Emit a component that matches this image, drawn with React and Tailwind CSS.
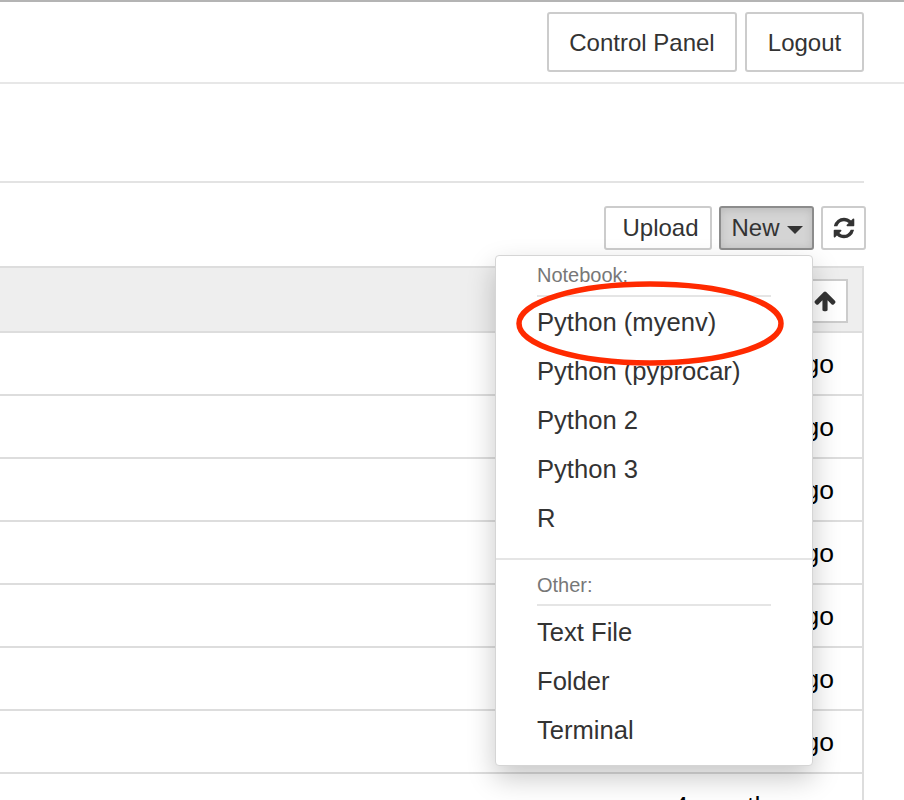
const font = { fontFamily: '"Liberation Sans", Arial, sans-serif' };

const kernels = ["Python (myenv)", "Python (pyprocar)", "Python 2", "Python 3", "R"];
const others = ["Text File", "Folder", "Terminal"];
const rows = [0, 1, 2, 3, 4, 5, 6];

const MenuItem = ({ label }) => (
  <div className="flex h-[49px] items-center pl-[41px] text-[25.6px] text-[#333]">{label}</div>
);

const RefreshIcon = () => (
  <svg width="24" height="24" viewBox="0 0 1792 1792" fill="currentColor">
    <path d="M1639 1056q0 5-1 7-64 268-268 434.5t-478 166.5q-146 0-282.5-55t-243.5-157l-129 129q-19 19-45 19t-45-19-19-45v-448q0-26 19-45t45-19h448q26 0 45 19t19 45-19 45l-137 137q71 66 161 102t187 36q134 0 250-65t186-179q11-17 53-117 8-23 30-23h192q13 0 22.5 9.5t9.5 22.5zm25-800v448q0 26-19 45t-45 19h-448q-26 0-45-19t-19-45 19-45l138-138q-148-137-349-137-134 0-250 65t-186 179q-11 17-53 117-8 23-30 23h-199q-13 0-22.5-9.5t-9.5-22.5v-7q65-268 270-434.5t480-166.5q146 0 284 55.5t245 156.5l130-129q19-19 45-19t45 19 19 45z" />
  </svg>
);

const ArrowUpIcon = () => (
  <svg width="24" height="24" viewBox="0 0 1792 1792" fill="currentColor">
    <path d="M1675 971q0 51-37 90l-75 75q-38 38-91 38-54 0-90-38l-294-293v704q0 52-37.5 84.5t-90.5 32.5h-128q-53 0-90.5-32.5t-37.5-84.5v-704l-294 293q-36 38-90 38t-90-38l-75-75q-38-38-38-90 0-53 38-91l651-651q35-37 90-37 54 0 91 37l651 651q37 39 37 91z" />
  </svg>
);

const App = () => {
  return (
    <div
      style={font}
      className="relative h-[800px] w-[904px] overflow-hidden border-t-2 border-[#b4b4b4] bg-white text-black"
    >
      {/* Top header */}
      <div className="flex h-[82px] justify-end gap-[8px] border-b-2 border-[#e7e7e7] pr-[40px] pt-[10px]">
        <button className="h-[60px] w-[190px] rounded-[3px] border-2 border-[#ccc] pt-[2px] text-[24px] text-[#333]">
          Control Panel
        </button>
        <button className="h-[60px] w-[119px] rounded-[3px] border-2 border-[#ccc] pt-[2px] text-[24px] text-[#333]">
          Logout
        </button>
      </div>

      <div className="h-[97px]" />

      <div className="w-[864px] border-b-2 border-[#e3e3e3]" />

      {/* Toolbar */}
      <div className="flex justify-end gap-[7px] pr-[38px] pt-[23px]">
        <button className="h-[44px] w-[108px] rounded-[3px] border-2 border-[#ccc] pl-[5px] text-[24px] text-[#333]">
          Upload
        </button>
        <button className="flex h-[44px] w-[95px] items-center justify-center gap-[7px] rounded-[3px] border-2 border-[#8c8c8c] bg-[#d4d4d4] pl-[1px] text-[24px] text-[#333] shadow-[inset_0_2px_8px_rgba(0,0,0,0.125)]">
          New
          <span className="mt-[3px] h-0 w-0 border-x-[8px] border-t-[8px] border-x-transparent border-t-[#333]" />
        </button>
        <button className="flex h-[44px] w-[45px] items-center justify-center rounded-[3px] border-2 border-[#ccc] text-[#333]">
          <RefreshIcon />
        </button>
      </div>

      {/* File list */}
      <div className="mt-[16px] w-[864px] border-r-2 border-t-2 border-[#ddd]">
        <div className="flex h-[65px] items-start justify-end border-b-2 border-[#ddd] bg-[#eee] pr-[14px] pt-[11px]">
          <button className="flex h-[44px] w-[60px] items-center justify-center border-2 border-[#ccc] bg-white pl-[14px] text-[#333]">
            <ArrowUpIcon />
          </button>
        </div>
        {rows.map((row) => (
          <div
            key={row}
            className="flex h-[63px] items-center justify-end border-b-2 border-[#ddd] pr-[28px] pt-[2px] text-[26.5px]"
          >
            4 months ago
          </div>
        ))}
        <div className="flex h-[63px] items-center justify-end pr-[28px] pt-[2px] text-[26.5px]">4 months ago</div>
      </div>

      {/* New dropdown */}
      <div className="absolute left-[495px] top-[253px] h-[511px] w-[318px] rounded-[4px] border border-[#d5d5d5] bg-white shadow-[0_12px_28px_rgba(0,0,0,0.22)]">
        <div className="mx-[41px] h-[41px] border-b-2 border-[#e5e5e5] text-[20px] leading-[38px] text-[#777]">
          Notebook:
        </div>
        <div className="pt-[1px]">
          {kernels.map((label) => (
            <MenuItem key={label} label={label} />
          ))}
        </div>
        <div className="mt-[15px] border-t-2 border-[#e5e5e5]" />
        <div className="mx-[41px] mt-[6px] h-[40px] border-b-2 border-[#e5e5e5] text-[20px] leading-[38px] text-[#777]">
          Other:
        </div>
        <div className="pt-[2px]">
          {others.map((label) => (
            <MenuItem key={label} label={label} />
          ))}
        </div>
      </div>

      {/* Red annotation */}
      <svg className="absolute left-[510px] top-[274px]" width="280" height="96" viewBox="0 0 280 96" fill="none">
        <ellipse cx="140" cy="47.5" rx="131" ry="39.5" stroke="#ff2a00" strokeWidth="5.5" />
      </svg>
    </div>
  );
};

export default App;
